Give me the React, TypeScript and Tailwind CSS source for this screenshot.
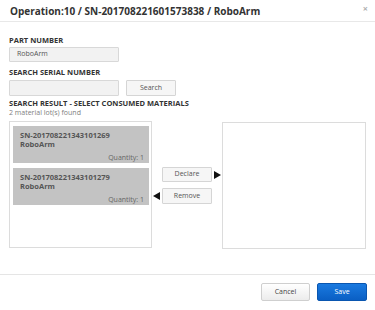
import React from "react";

const font = { fontFamily: '"Open Sans", "Noto Sans", sans-serif' };

function Item({ sn }: { sn: string }) {
  return (
    <div className="h-[37px] bg-[#c3c3c3] pl-[7px] pr-[5px] pt-[5px] flex flex-col text-[#555]">
      <div className="text-[7.5px] font-bold leading-[9px]">{sn}</div>
      <div className="text-[7.5px] font-bold leading-[9px]">RoboArm</div>
      <div className="text-[7px] leading-[9px] text-right text-[#666] mt-[4px]">Quantity: 1</div>
    </div>
  );
}

export default function App() {
  return (
    <div className="w-[375px] h-[310px] bg-white flex flex-col relative text-[#333]" style={font}>
      <div className="h-[22px] border-b border-[#e8e8e8] px-[10px] flex items-center">
        <div className="text-[10px] font-bold leading-[12px] text-[#333]">
          Operation:10 / SN-201708221601573838 / RoboArm
        </div>
        <span className="absolute right-[7px] top-[4px] text-[9px] font-bold text-[#b0b0b0] leading-[10px]">×</span>
      </div>
      <div className="flex-1 px-[9px]">
        <div className="mt-[13px] h-[10px] leading-[10px] text-[7.5px] font-bold">PART NUMBER</div>
        <div className="mt-[2px] w-[110px] h-[15px] border border-[#d8d8d8] bg-[#f2f2f2] rounded-[1px] px-[7px] flex items-center text-[7px] text-[#555]">
          RoboArm
        </div>
        <div className="mt-[5px] h-[10px] leading-[10px] text-[7.5px] font-bold">SEARCH SERIAL NUMBER</div>
        <div className="mt-[3px] flex gap-[7px]">
          <div className="w-[110px] h-[16px] border border-[#d8d8d8] bg-[#f2f2f2] rounded-[1px]" />
          <div className="w-[50px] h-[16px] border border-[#d5d5d5] bg-[#f6f6f6] rounded-[1px] flex items-center justify-center text-[7px] text-[#555]">
            Search
          </div>
        </div>
        <div className="mt-[2px] h-[10px] leading-[10px] text-[7.5px] font-bold">
          SEARCH RESULT - SELECT CONSUMED MATERIALS
        </div>
        <div className="h-[10px] leading-[10px] text-[7px] text-[#808080]">2 material lot(s) found</div>
        <div className="mt-[3px] flex">
          <div className="w-[144px] h-[127px] border border-[#dcdcdc] pt-[4px] pl-[3px] pr-[2px] flex flex-col gap-[5px]">
            <Item sn="SN-201708221343101269" />
            <Item sn="SN-201708221343101279" />
          </div>
          <div className="w-[70px] flex flex-col pt-[46px]">
            <div className="flex items-center pl-[10px]">
              <div className="w-[50px] h-[15px] border border-[#d5d5d5] bg-[#f6f6f6] rounded-[1px] flex items-center justify-center text-[7px] text-[#555]">
                Declare
              </div>
              <svg width="8" height="8" viewBox="0 0 8 8" className="ml-[2px]">
                <path d="M0 0 L7 4 L0 8 Z" fill="#111" />
              </svg>
            </div>
            <div className="flex items-center mt-[6px]">
              <svg width="7" height="8" viewBox="0 0 7 8" className="ml-[1px] mr-[2px]">
                <path d="M7 0 L0 4 L7 8 Z" fill="#111" />
              </svg>
              <div className="w-[50px] h-[16px] border border-[#d5d5d5] bg-[#f6f6f6] rounded-[1px] flex items-center justify-center text-[7px] text-[#555]">
                Remove
              </div>
            </div>
          </div>
          <div className="w-[145px] h-[127px] mt-[1px] border border-[#dcdcdc]" />
        </div>
      </div>
      <div className="h-[36px] border-t border-[#e5e5e5] flex justify-end items-start pt-[8px] pr-[8px] gap-[7px]">
        <div className="w-[49px] h-[18px] border border-[#cfcfcf] rounded-[2px] bg-gradient-to-b from-[#ffffff] to-[#ececec] flex items-center justify-center text-[7px] text-[#444]">
          Cancel
        </div>
        <div className="w-[50px] h-[18px] border border-[#0a56b0] rounded-[2px] bg-gradient-to-b from-[#1a7ae0] to-[#0a5fc4] flex items-center justify-center text-[7px] text-white">
          Save
        </div>
      </div>
    </div>
  );
}
